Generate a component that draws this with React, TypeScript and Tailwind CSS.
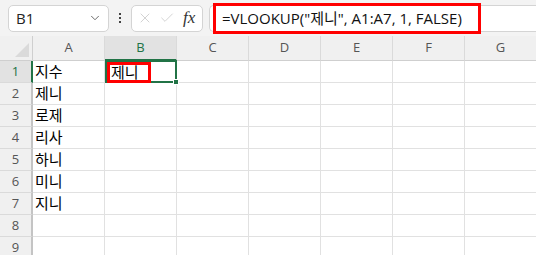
import { ChevronDown, X, Check } from 'lucide-react'

const cols = ['A', 'B', 'C', 'D', 'E', 'F', 'G']
const names = ['지수', '제니', '로제', '리사', '하니', '미니', '지니', '', '']

const ko = { fontFamily: '"Noto Sans CJK KR", "Malgun Gothic", sans-serif' }
const ui = { fontFamily: '"Open Sans", "Noto Sans", sans-serif' }

export default function App() {
  return (
    <div className="h-[255px] w-[536px] overflow-hidden bg-white" style={ui}>
      {/* formula bar */}
      <div className="flex h-9 items-center bg-[#f3f3f3] pl-2">
        <div className="flex h-[27px] w-[101px] items-center justify-between rounded-[5px] border border-[#d4d4d4] bg-white pl-[7px] pr-[6px] text-[15px] text-[#242424]">
          <span>B1</span>
          <ChevronDown size={14} strokeWidth={1.6} className="text-[#616161]" />
        </div>
        <div className="flex w-[22px] flex-col items-center gap-[2px]">
          <span className="h-[2px] w-[2px] bg-[#424242]" />
          <span className="h-[2px] w-[2px] bg-[#424242]" />
          <span className="h-[2px] w-[2px] bg-[#424242]" />
        </div>
        <div className="flex h-[27px] w-[72px] items-center gap-[6px] rounded-[5px] border border-[#d4d4d4] bg-white pl-[5px]">
          <X size={16} strokeWidth={1.2} className="text-[#c8c8c8]" />
          <Check size={16} strokeWidth={1.2} className="text-[#c8c8c8]" />
          <span className="ml-[2px] text-[17px] italic text-[#333]" style={{ fontFamily: '"Liberation Serif", serif' }}>fx</span>
        </div>
        <div className="ml-[6px] flex h-[27px] flex-1 items-center rounded-l-[5px] border border-r-0 border-[#d4d4d4] bg-white pl-[3px]">
          <span className="-my-[3px] flex h-[31px] w-[268px] items-center border-[3px] border-[#ff0000] pl-[6px] text-[15px] text-[#111]" style={{ fontFamily: '"Open Sans", "Noto Sans CJK KR", sans-serif' }}>
            =VLOOKUP("<span style={ko}>제니</span>", A1:A7, 1, FALSE)
          </span>
        </div>
      </div>

      {/* grid */}
      <div className="grid grid-cols-[33px_repeat(7,72px)]">
        <div className="relative h-[25px] border-b border-r border-[#cfcfcf] bg-[#f0f0f0]">
          <span className="absolute bottom-[3px] right-[3px] h-0 w-0 border-b-[14px] border-l-[14px] border-b-[#dadada] border-l-transparent" />
        </div>
        {cols.map((c) => (
          <div
            key={c}
            className={
              'flex h-[25px] items-center justify-center border-r border-[#dadada] text-[13px] ' +
              (c === 'B' ? 'border-b-2 border-b-[#217346] bg-[#e2e2e2] text-[#217346]' : 'border-b border-b-[#cfcfcf] bg-[#f0f0f0] text-[#555]')
            }
          >
            {c}
          </div>
        ))}
        {names.map((n, i) => (
          <Row key={i} idx={i + 1} name={n} />
        ))}
      </div>
    </div>
  )
}

function Row({ idx, name }: { idx: number; name: string }) {
  const sel = idx === 1
  return (
    <>
      <div
        className={
          'flex h-[22px] items-center justify-center border-b border-[#dadada] text-[13px] ' +
          (sel ? 'border-r-2 border-r-[#217346] bg-[#e2e2e2] text-[#217346]' : 'border-r-2 border-r-[#c4c4c4] bg-[#f0f0f0] text-[#555]')
        }
      >
        {idx}
      </div>
      <div className="flex h-[22px] items-center border-b border-r border-[#e1e1e1] pl-[2px] text-[15px] text-black" style={ko}>
        {name}
      </div>
      {sel ? (
        <div className="relative -mt-[1px] h-[23px] border-2 border-[#217346]">
          <span className="flex h-[21px] w-[44px] items-center border-[3px] border-[#ff0000] pl-[1px] text-[15px] text-black" style={ko}>
            제니
          </span>
          <span className="absolute -bottom-[4px] -right-[4px] h-[6px] w-[6px] border border-white bg-[#217346]" />
        </div>
      ) : (
        <div className="h-[22px] border-b border-r border-[#e1e1e1]" />
      )}
      {[0, 1, 2, 3, 4].map((k) => (
        <div key={k} className="h-[22px] border-b border-r border-[#e1e1e1]" />
      ))}
    </>
  )
}
